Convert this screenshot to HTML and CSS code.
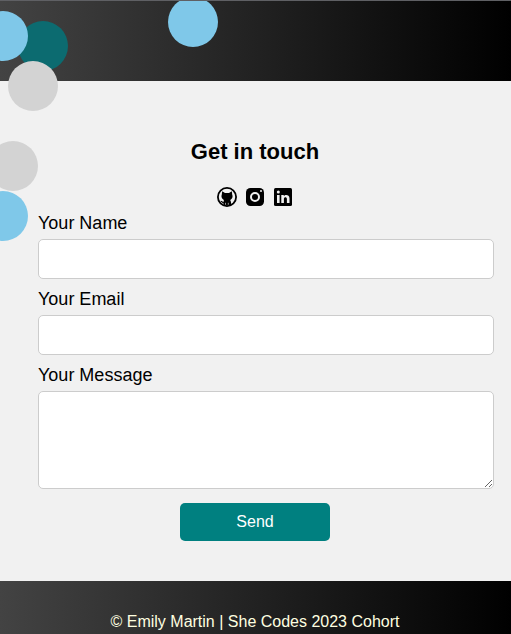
FILE: index.html
```html
<!DOCTYPE html>
<html lang="en">
<head>
<meta charset="utf-8">
<title>Get in touch</title>
<link rel="stylesheet" href="styles.css">
</head>
<body>
<header class="banner"></header>
<div class="bubbles" aria-hidden="true">
  <span class="bubble teal b1"></span>
  <span class="bubble blue b2"></span>
  <span class="bubble grey b3"></span>
  <span class="bubble blue b4"></span>
  <span class="bubble grey b5"></span>
  <span class="bubble blue b6"></span>
</div>
<main class="contact">
  <h1 class="title">Get in touch</h1>
  <nav class="social">
    <a class="social-link" href="#" aria-label="GitHub">
      <svg viewBox="0 0 20 20"><circle cx="10" cy="10" r="9.100" fill="none" stroke="#000" stroke-width="1.800"/><path d="M5.200 4.300L8 6h4l2.800-1.700.4 3.200c.8 1.900.3 3.900-1.300 5.100l-.7.500.8 2V18.500H6.700v-1.700L4.200 15l-.7-1.200 1.400.2 1.500 1.200.5-2.100-.7-.5C4.600 11.400 4 9.400 4.800 7.500z"/><path d="M8.500 15.800v2M11.300 15.800v2" stroke="#f1f1f1" stroke-width=".6"/></svg>
    </a>
    <a class="social-link" href="#" aria-label="Instagram">
      <svg viewBox="0 0 20 20"><rect x="1" y="1" width="18" height="18" rx="4.500"/><circle cx="10" cy="10" r="4" fill="none" stroke="#f1f1f1" stroke-width="2"/><circle cx="16" cy="4" r="1" fill="#f1f1f1"/></svg>
    </a>
    <a class="social-link" href="#" aria-label="LinkedIn">
      <svg viewBox="0 0 20 20"><rect x="1" y="1" width="18" height="18" rx="1.500"/><g fill="#f1f1f1"><circle cx="5.300" cy="5.100" r="1.500"/><path d="M4 8h2.600v8H4zM8.300 8h2.500v1.100c1.300-2 5.700-1.700 5.700 2.100V16h-2.600v-4.100c0-2.400-3-2.300-3 0V16H8.300z"/></g></svg>
    </a>
  </nav>
  <form class="form">
    <label class="label" for="name">Your Name</label>
    <input class="field" id="name" type="text">
    <label class="label" for="email">Your Email</label>
    <input class="field" id="email" type="email">
    <label class="label" for="message">Your Message</label>
    <textarea class="field message" id="message"></textarea>
    <button class="send" type="button">Send</button>
  </form>
</main>
<footer class="footer">© Emily Martin | She Codes 2023 Cohort</footer>
</body>
</html>
```
FILE: styles.css
```css
* { box-sizing: border-box; }

body {
  position: relative;
  display: flex;
  flex-direction: column;
  height: 634px;
  margin: 0;
  overflow: hidden;
  background: #f1f1f1;
  color: #000;
  font-family: "Liberation Sans", Arial, sans-serif;
}

.banner {
  height: 81px;
  flex: none;
  border-top: 1px solid #5f6064;
  background: linear-gradient(to right, #434343, #000);
}

.bubbles {
  position: absolute;
  inset: 1px 0 0;
  overflow: hidden;
  pointer-events: none;
}

.bubble {
  position: absolute;
  width: 50px;
  height: 50px;
  border-radius: 50%;
}

.teal { background: #0c6b70; }
.blue { background: #7fc8e9; }
.grey { background: #d3d3d3; }
.b1 { left: 18px; top: 20px; }
.b2 { left: -22px; top: 10px; }
.b3 { left: 8px; top: 60px; }
.b4 { left: 168px; top: -4px; }
.b5 { left: -12px; top: 140px; }
.b6 { left: -22px; top: 190px; }

.contact {
  flex: none;
  height: 500px;
  padding: 58px 17px 0 38px;
}

.title {
  margin: 0 -17px 0 -38px;
  padding-right: 1px;
  font-size: 22px;
  line-height: 26px;
  text-align: center;
}

.social {
  display: flex;
  justify-content: center;
  gap: 8px;
  height: 20px;
  margin: 22px -17px 0 -38px;
  padding-right: 1px;
}

.social-link { width: 20px; height: 20px; color: #000; }
.social-link svg { display: block; width: 20px; height: 20px; }

.form { display: flex; flex-direction: column; }

.label {
  height: 32px;
  padding-top: 6px;
  font-size: 18px;
  line-height: 21px;
}

.field {
  display: block;
  width: 100%;
  height: 40px;
  margin: 0 0 4px;
  padding: 10px;
  border: 1px solid #ccc;
  border-radius: 5px;
  background: #fff;
  font: inherit;
}

.message { height: 98px; margin-bottom: 14px; resize: both; }

.send {
  width: 150px;
  height: 38px;
  margin-left: 142px;
  padding: 0;
  border: 0;
  border-radius: 5px;
  background: #008080;
  color: #fff;
  font: 16px "Liberation Sans", Arial, sans-serif;
}

.footer {
  flex: 1;
  padding: 32px 1px 0 0;
  background: linear-gradient(to right, #434343, #000);
  color: #ffffe0;
  font-size: 16px;
  line-height: 18px;
  text-align: center;
}
```
